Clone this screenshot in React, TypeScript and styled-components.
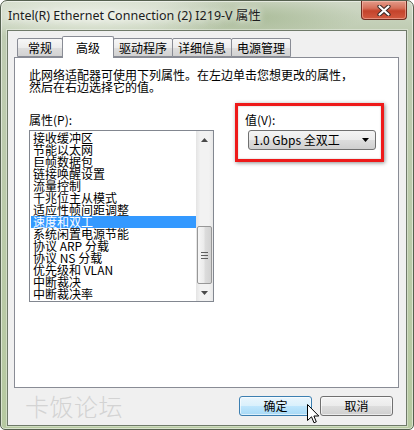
import React from "react";
import styled, { createGlobalStyle } from "styled-components";

const GlobalStyle = createGlobalStyle`
  html, body { margin: 0; padding: 0; background: #ffffff; }
  body { font-family: "Noto Sans CJK SC", "Noto Sans", sans-serif; }
  * { box-sizing: border-box; }
`;

const properties = [
  "接收缓冲区",
  "节能以太网",
  "巨帧数据包",
  "链接唤醒设置",
  "流量控制",
  "千兆位主从模式",
  "适应性帧间距调整",
  "速度和双工",
  "系统闲置电源节能",
  "协议 ARP 分载",
  "协议 NS 分载",
  "优先级和 VLAN",
  "中断裁决",
  "中断裁决率",
];

const tabs = ["常规", "高级", "驱动程序", "详细信息", "电源管理"];

const Frame = styled.div`
  position: relative;
  width: 414px;
  height: 430px;
  padding: 0 6px 3px;
  display: flex;
  flex-direction: column;
  border: 1px solid #55604f;
  border-radius: 7px 7px 5px 5px;
  background:
    radial-gradient(ellipse 150px 26px at 90px 14px, rgba(238, 242, 232, 0.95), rgba(238, 242, 232, 0)),
    radial-gradient(ellipse 110px 22px at 250px 16px, rgba(150, 172, 128, 0.55), rgba(150, 172, 128, 0)),
    linear-gradient(180deg, #cfd8c6 0, #bfccb2 30px, #b6c9a0 100%);
  box-shadow: inset 0 0 0 1px rgba(255, 255, 255, 0.5);
  overflow: hidden;
`;

const TitleBar = styled.div`
  height: 29px;
  display: flex;
  align-items: flex-start;
`;

const Title = styled.div`
  padding: 8px 0 0 1px;
  font-family: "Noto Sans", "Noto Sans CJK SC", sans-serif;
  font-size: 12.5px;
  line-height: 14px;
  color: #1c1c1c;
  text-shadow: 0 0 6px rgba(255, 255, 255, 0.9), 0 0 10px rgba(255, 255, 255, 0.7);
  white-space: nowrap;
`;

const CloseButton = styled.div`
  margin-left: auto;
  width: 46px;
  height: 19px;
  display: flex;
  align-items: center;
  justify-content: center;
  border: 1px solid #6e2c20;
  border-top: none;
  border-radius: 0 0 4px 4px;
  background: linear-gradient(180deg, #e39b89 0%, #d6705a 40%, #c4432b 55%, #d25a40 100%);
  box-shadow: inset 0 0 0 1px rgba(255, 210, 200, 0.45);
`;

const Client = styled.div`
  flex: 1;
  display: flex;
  flex-direction: column;
  padding: 5px 7px 9px 6px;
  background: #f0f0f0;
  border: 1px solid #6f7a69;
  box-shadow: 0 0 0 1px rgba(255, 255, 255, 0.35);
`;

const TabStrip = styled.div`
  height: 21px;
  display: flex;
  align-items: flex-end;
  padding-left: 3px;
  position: relative;
  z-index: 1;
`;

const Tab = styled.div<{ $active?: boolean }>`
  height: ${(p) => (p.$active ? 22 : 19)}px;
  min-width: ${(p) => (p.$active ? 52 : 46)}px;
  margin-right: -1px;
  margin-bottom: ${(p) => (p.$active ? -1 : 0)}px;
  padding: 0 5px;
  display: flex;
  align-items: center;
  justify-content: center;
  font-size: 12px;
  line-height: 12px;
  color: #000;
  border: 1px solid #898c95;
  border-bottom: ${(p) => (p.$active ? "none" : "1px solid #898c95")};
  border-radius: 2px 2px 0 0;
  background: ${(p) =>
    p.$active
      ? "#ffffff"
      : "linear-gradient(180deg, #f7f7f7 0%, #ececec 50%, #dedede 51%, #d2d2d2 100%)"};
  position: relative;
  z-index: ${(p) => (p.$active ? 2 : 1)};
`;

const Panel = styled.div`
  flex: 1;
  background: #ffffff;
  border: 1px solid #898c95;
  padding: 11px 14px 0;
`;

const Description = styled.div`
  font-size: 12px;
  line-height: 12px;
  color: #000;
`;

const Row = styled.div`
  margin-top: 10px;
  display: flex;
  align-items: flex-start;
`;

const LeftColumn = styled.div`
  padding-top: 11px;
  display: flex;
  flex-direction: column;
`;

const Label = styled.div`
  font-size: 12px;
  line-height: 12px;
  color: #000;
  margin-bottom: 4px;
`;

const ListBox = styled.div`
  width: 185px;
  height: 172px;
  border: 1px solid #828790;
  display: flex;
  background: #fff;
`;

const Items = styled.div`
  flex: 1;
  padding: 1px 0 0 1px;
`;

const Item = styled.div<{ $selected?: boolean }>`
  height: 12px;
  padding-left: 2px;
  font-size: 12px;
  line-height: 12px;
  white-space: nowrap;
  color: ${(p) => (p.$selected ? "#ffffff" : "#000000")};
  background: ${(p) => (p.$selected ? "#3399ff" : "transparent")};
`;

const ScrollBar = styled.div`
  width: 17px;
  display: flex;
  flex-direction: column;
  background: linear-gradient(90deg, #e4e4e4 0%, #f2f2f2 25%, #f2f2f2 75%, #e8e8e8 100%);
`;

const ScrollButton = styled.div`
  height: 17px;
  display: flex;
  align-items: center;
  justify-content: center;
`;

const Track = styled.div`
  flex: 1;
  display: flex;
  flex-direction: column;
  justify-content: flex-end;
`;

const Thumb = styled.div`
  height: 58px;
  margin: 0 1px;
  border: 1px solid #979797;
  border-radius: 2px;
  background: linear-gradient(90deg, #f6f6f6 0%, #ebebeb 45%, #dcdcdc 55%, #d2d2d2 100%);
  display: flex;
  align-items: center;
  justify-content: center;
`;

const Grip = styled.div`
  width: 7px;
  height: 7px;
  background: repeating-linear-gradient(180deg, #5f5f5f 0 1px, transparent 1px 3px);
`;

const Highlight = styled.div`
  margin-left: 21px;
  width: 160px;
  height: 59px;
  border: 3px solid #ee1a1a;
  box-shadow: 1px 1px 4px rgba(0, 0, 0, 0.45), inset 0 0 2px rgba(0, 0, 0, 0.25);
  padding: 8px 5px 0 7px;
`;

const Select = styled.div`
  margin-left: 3px;
  height: 20px;
  display: flex;
  align-items: center;
  padding: 0 6px 0 4px;
  border: 1px solid #707070;
  border-radius: 3px;
  background: linear-gradient(180deg, #f4f4f4 0%, #ebebeb 50%, #dddddd 51%, #cfcfcf 100%);
  font-size: 12px;
  line-height: 12px;
  color: #000;
  justify-content: space-between;
`;

const Footer = styled.div`
  margin-top: 8px;
  height: 20px;
  display: flex;
  align-items: center;
  padding: 0 6px 0 11px;
  gap: 8px;
`;

const Watermark = styled.div`
  margin-right: auto;
  font-size: 24px;
  line-height: 20px;
  font-weight: 300;
  color: #d3d3d3;
  letter-spacing: 0.5px;
`;

const Button = styled.div<{ $hover?: boolean }>`
  width: 73px;
  height: 20px;
  display: flex;
  align-items: center;
  justify-content: center;
  border: 1px solid ${(p) => (p.$hover ? "#3c7fb1" : "#707070")};
  border-radius: 3px;
  font-size: 12px;
  line-height: 12px;
  color: #000;
  background: ${(p) =>
    p.$hover
      ? "linear-gradient(180deg, #eaf6fd 0%, #d9f0fc 50%, #bee6fd 51%, #a7d9f5 100%)"
      : "linear-gradient(180deg, #f4f4f4 0%, #ebebeb 50%, #dddddd 51%, #cfcfcf 100%)"};
  box-shadow: inset 0 0 0 1px rgba(255, 255, 255, 0.6);
`;

const Cursor = styled.svg`
  position: absolute;
  left: 306px;
  top: 403px;
`;

const CloseGlyph = () => (
  <svg width="14" height="11" viewBox="0 0 14 11">
    <path d="M2.5 1.5 L11.5 9.5 M11.5 1.5 L2.5 9.5" stroke="#3a2a26" strokeWidth="4.2" strokeLinecap="round" />
    <path d="M2.5 1.5 L11.5 9.5 M11.5 1.5 L2.5 9.5" stroke="#ffffff" strokeWidth="2.2" strokeLinecap="round" />
  </svg>
);

const Arrow = ({ up }: { up?: boolean }) => (
  <svg width="7" height="4" viewBox="0 0 7 4">
    <path d={up ? "M3.5 0 L7 4 L0 4 Z" : "M0 0 L7 0 L3.5 4 Z"} fill="#4a4a4a" />
  </svg>
);

export default function App() {
  return (
    <>
      <GlobalStyle />
      <Frame>
        <TitleBar>
          <Title>Intel(R) Ethernet Connection (2) I219-V 属性</Title>
          <CloseButton>
            <CloseGlyph />
          </CloseButton>
        </TitleBar>
        <Client>
          <TabStrip>
            {tabs.map((t) => (
              <Tab key={t} $active={t === "高级"}>
                {t}
              </Tab>
            ))}
          </TabStrip>
          <Panel>
            <Description>
              此网络适配器可使用下列属性。在左边单击您想更改的属性，
              <br />
              然后在右边选择它的值。
            </Description>
            <Row>
              <LeftColumn>
                <Label>属性(P):</Label>
                <ListBox>
                  <Items>
                    {properties.map((p) => (
                      <Item key={p} $selected={p === "速度和双工"}>
                        {p}
                      </Item>
                    ))}
                  </Items>
                  <ScrollBar>
                    <ScrollButton>
                      <Arrow up />
                    </ScrollButton>
                    <Track>
                      <Thumb>
                        <Grip />
                      </Thumb>
                    </Track>
                    <ScrollButton>
                      <Arrow />
                    </ScrollButton>
                  </ScrollBar>
                </ListBox>
              </LeftColumn>
              <Highlight>
                <Label>值(V):</Label>
                <Select>
                  <span>1.0 Gbps 全双工</span>
                  <svg width="7" height="4" viewBox="0 0 7 4">
                    <path d="M0 0 L7 0 L3.5 4 Z" fill="#000" />
                  </svg>
                </Select>
              </Highlight>
            </Row>
          </Panel>
          <Footer>
            <Watermark>卡饭论坛</Watermark>
            <Button $hover>确定</Button>
            <Button>取消</Button>
          </Footer>
        </Client>
        <Cursor width="13" height="20" viewBox="0 0 13 20">
          <path
            d="M0.5 0.5 L0.5 16.5 L4.5 12.8 L7 18.8 L9.3 17.8 L6.9 12 L11.8 12 Z"
            fill="#ffffff"
            stroke="#000000"
            strokeWidth="1"
            strokeLinejoin="miter"
          />
        </Cursor>
      </Frame>
    </>
  );
}
